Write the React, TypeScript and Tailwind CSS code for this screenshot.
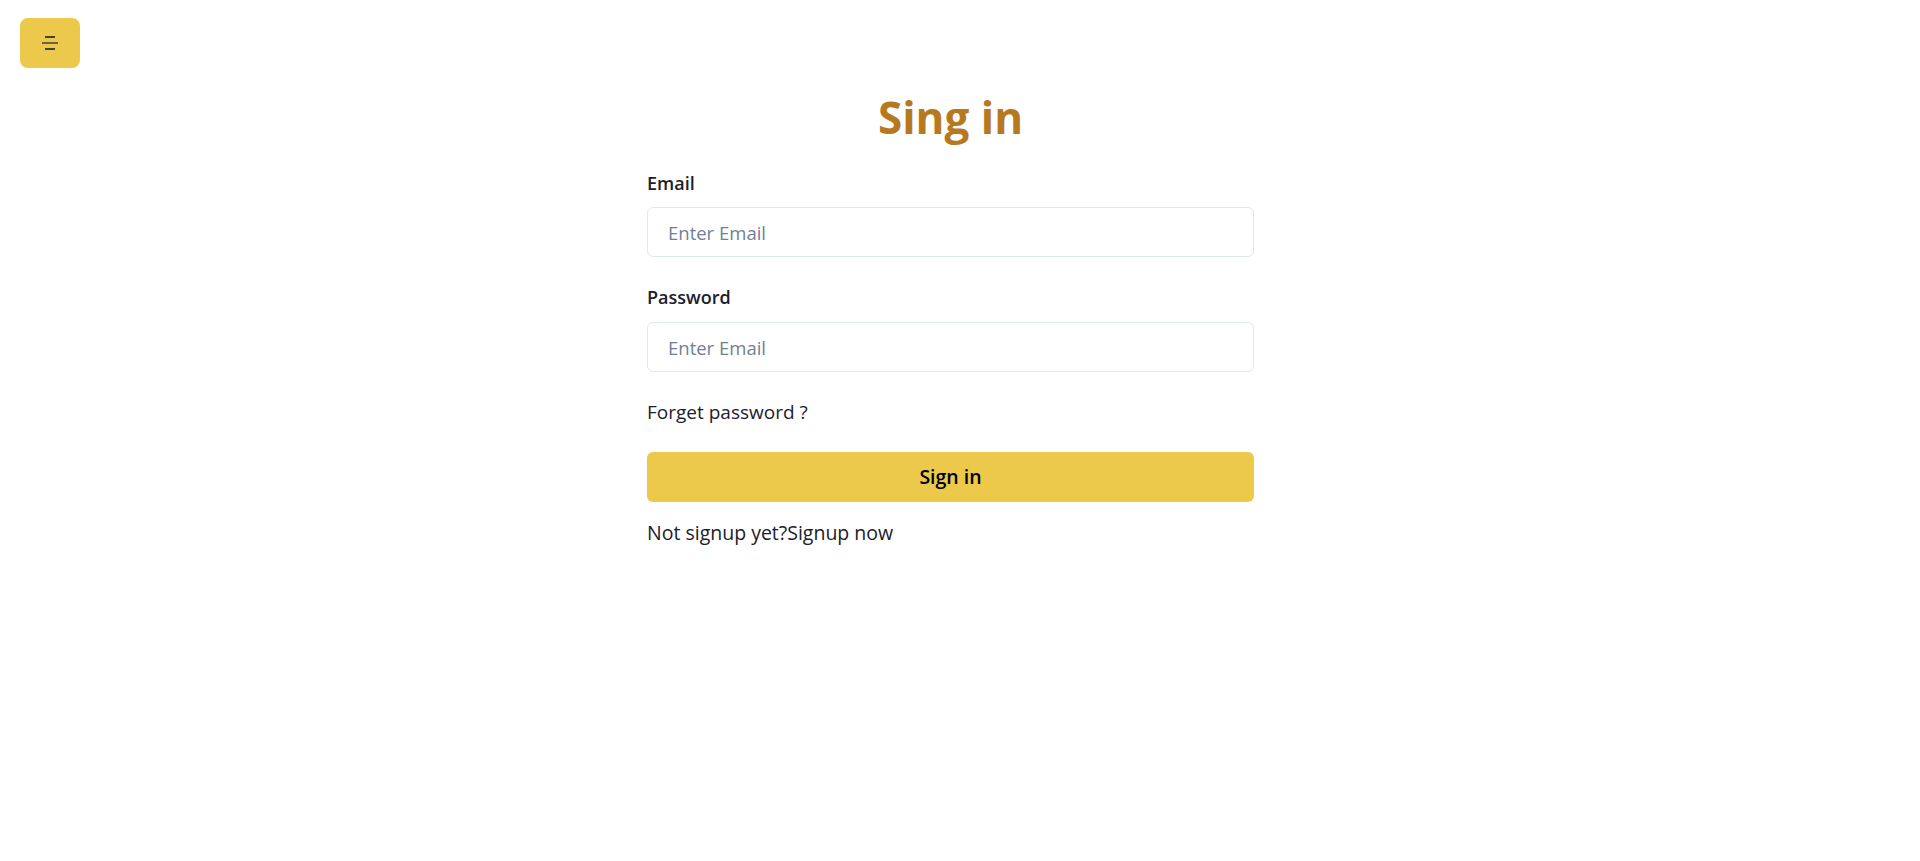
import { useState } from 'react';

function MenuIcon() {
  return (
    <svg width="20" height="20" viewBox="0 0 20 20" fill="none" className="text-[#1a202c]">
      <line x1="5" y1="4" x2="15" y2="4" stroke="currentColor" strokeWidth="1.6" />
      <line x1="2" y1="10" x2="18" y2="10" stroke="currentColor" strokeWidth="1.6" strokeOpacity="0.75" />
      <line x1="5" y1="16" x2="15" y2="16" stroke="currentColor" strokeWidth="1.6" />
    </svg>
  );
}

export default function App() {
  const [email, setEmail] = useState('');
  const [password, setPassword] = useState('');

  return (
    <div className="min-h-[1160px] bg-white pr-[19px] font-['Open_Sans',sans-serif] text-[#1a202c]">
      {/* Sidebar toggle */}
      <div className="px-5 pt-[18px]">
        <button className="flex h-[50px] w-[60px] items-center justify-center rounded-lg bg-[#ecc94b]">
          <MenuIcon />
        </button>
      </div>

      {/* Sign in form */}
      <div className="mx-auto w-[607px]">
        <h1 className="mt-[27px] text-center text-[44px] leading-none font-bold text-[#b7791f]">Sing in</h1>

        <label className="mt-[31px] mb-[10px] block text-[18px] leading-[27px] font-semibold">Email</label>
        <input
          type="email"
          value={email}
          onChange={(e) => setEmail(e.target.value)}
          placeholder="Enter Email"
          className="block h-[50px] w-full rounded-md border border-[#e2e8f0] px-5 text-[18.5px] outline-none placeholder:text-[#718096]"
        />

        <label className="mt-[27px] mb-[11px] block text-[18px] leading-[27px] font-semibold">Password</label>
        <input
          type="password"
          value={password}
          onChange={(e) => setPassword(e.target.value)}
          placeholder="Enter Email"
          className="block h-[50px] w-full rounded-md border border-[#e2e8f0] px-5 text-[18.5px] outline-none placeholder:text-[#718096]"
        />

        <p className="mt-[27px] text-[19px] leading-[27px]">Forget password ?</p>

        <button className="mt-[26px] h-[50px] w-full rounded-md bg-[#ecc94b] text-[19.5px] font-semibold text-black">
          Sign in
        </button>

        <p className="mt-[17px] text-[19.5px] leading-[27px]">
          Not signup yet?<a href="#">Signup now</a>
        </p>
      </div>
    </div>
  );
}
